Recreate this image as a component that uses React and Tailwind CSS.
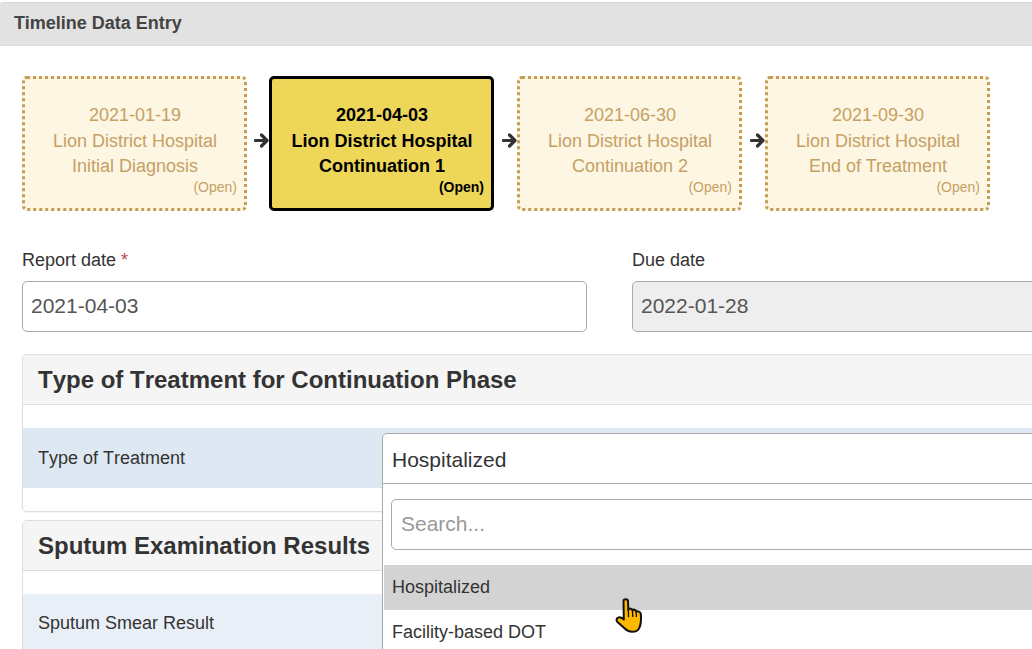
import React from "react";

function Step({ date, site, phase, active }) {
  const cls = active
    ? "border-[3px] border-solid border-black bg-[#eed658] text-black font-bold"
    : "border-[3px] border-dotted border-[#c49c55] bg-[#fdf6e3] text-[#c6a064]";
  return (
    <div className={"relative w-[225px] h-[135px] shrink-0 rounded-[5px] text-center text-[18px] leading-[25.7px] pt-[24px] pl-[1px] " + cls}>
      <div>{date}</div>
      <div>{site}</div>
      <div>{phase}</div>
      <div className="absolute right-[7px] top-[98px] text-[14px] leading-[20px]">(Open)</div>
    </div>
  );
}

function Arrow({ w }) {
  return (
    <div className={"shrink-0 flex justify-end pt-[57px] " + w}>
      <svg width="15" height="15" viewBox="0 0 15 15" className="block">
        <path d="M1.5 7.5 H12 M7.5 2 L13 7.5 L7.5 13" fill="none" stroke="#333333" strokeWidth="3.2" strokeLinecap="round" strokeLinejoin="round" />
      </svg>
    </div>
  );
}

function Hand() {
  return (
    <svg className="absolute z-20 left-[615px] top-[598px]" width="28" height="35" viewBox="0 0 28 35">
      <path
        d="M8.5 3 C8.5 0.8 13 0.8 13 3 L13.3 12 C14.5 10 17.2 10.2 17.5 12.5 C18.5 11 21 11.5 21.2 13.8 C22.5 12.8 25.6 13.5 25.8 16 C26.2 20 26 26 24.5 29.5 C23.5 32.5 20.5 33.8 17 33.8 C14 33.8 11.5 32.3 9.5 30.3 L2.5 24 C0.8 22.3 1.5 20 3.5 19.5 C5 19 7 20 8.8 21.5 Z"
        fill="#ffb800"
        stroke="#111111"
        strokeWidth="2"
        strokeLinejoin="round"
      />
      <path d="M17.5 12.5 L17.8 19 M21.2 13.8 L21.4 19 M13.3 12 L13.5 19" stroke="#111111" strokeWidth="1.3" fill="none" />
    </svg>
  );
}

export default function App() {
  return (
    <div className="relative w-[1032px] h-[649px] overflow-hidden bg-white text-[#333333] font-['Liberation_Sans',Arial,sans-serif]">
      <div className="w-[1300px]">
        <div className="mt-[2px] h-[44px] border-t border-t-[#d8d8d8] border-b border-b-[#dddddd] bg-[#e2e2e2] rounded-tl-[3px] px-[14px] text-[18px] leading-[40px] font-bold text-[#444444]">
          Timeline Data Entry
        </div>

        <div className="flex pl-[22px] mt-[30px]">
          <Step date="2021-01-19" site="Lion District Hospital" phase="Initial Diagnosis" />
          <Arrow w="w-[22px]" />
          <Step active date="2021-04-03" site="Lion District Hospital" phase="Continuation 1" />
          <Arrow w="w-[23px]" />
          <Step date="2021-06-30" site="Lion District Hospital" phase="Continuation 2" />
          <Arrow w="w-[23px]" />
          <Step date="2021-09-30" site="Lion District Hospital" phase="End of Treatment" />
        </div>

        <div className="flex gap-[45px] pl-[22px] mt-[36px]">
          <div className="w-[565px]">
            <div className="text-[18px] leading-[26px] mb-[8px]">
              Report date <span className="text-[#b94a48]">*</span>
            </div>
            <div className="h-[51px] border border-[#aaaaaa] rounded-[5px] bg-white px-[8px] text-[21px] leading-[48px] text-[#555555]">
              2021-04-03
            </div>
          </div>
          <div className="w-[565px]">
            <div className="text-[18px] leading-[26px] mb-[8px]">Due date</div>
            <div className="h-[51px] border border-[#aaaaaa] rounded-[5px] bg-[#eeeeee] px-[8px] text-[21px] leading-[48px] text-[#555555]">
              2022-01-28
            </div>
          </div>
        </div>

        <div className="ml-[22px] w-[1175px] mt-[22px] h-[158px] border border-[#dddddd] rounded-[5px] shadow-[0_1px_1px_rgba(0,0,0,0.05)] bg-white">
          <div className="h-[50px] bg-[#f5f5f5] border-b border-[#dddddd] rounded-t-[4px] px-[15px] text-[24px] leading-[49px] font-bold [font-kerning:none]">
            Type of Treatment for Continuation Phase
          </div>
          <div className="mt-[23px] h-[60px] bg-[#dee8f2] flex py-[5px]">
            <div className="w-[359px] shrink-0 pl-[15px] text-[18px] leading-[50px] [font-kerning:none]">Type of Treatment</div>
            <div className="relative flex-1 h-[50px]">
              <div className="h-[51px] border border-[#aaaaaa] rounded-t-[5px] bg-white px-[9px] text-[21px] leading-[52px] text-[#333333]">
                Hospitalized
              </div>
              <div className="absolute z-10 left-0 right-0 top-[51px] h-[300px] bg-white border-x border-[#aaaaaa] px-[1px]">
                <div className="px-[7px] pt-[15px]">
                  <div className="h-[51px] border border-[#aaaaaa] rounded-[5px] bg-white px-[9px] text-[21px] leading-[48px] text-[#999999]">
                    Search...
                  </div>
                </div>
                <div className="mt-[15px] h-[45px] bg-[#d3d3d3] px-[8px] text-[18px] leading-[45px]">Hospitalized</div>
                <div className="h-[45px] px-[8px] text-[18px] leading-[45px]">Facility-based DOT</div>
              </div>
            </div>
          </div>
        </div>

        <div className="ml-[22px] w-[1175px] mt-[8px] h-[160px] border border-[#dddddd] rounded-[5px] bg-white">
          <div className="h-[50px] bg-[#f5f5f5] border-b border-[#dddddd] rounded-t-[4px] px-[15px] text-[24px] leading-[49px] font-bold">
            Sputum Examination Results
          </div>
          <div className="mt-[23px] h-[60px] bg-[#e9eff6] pl-[15px] text-[18px] leading-[58px]">Sputum Smear Result</div>
        </div>
      </div>
      <Hand />
    </div>
  );
}
